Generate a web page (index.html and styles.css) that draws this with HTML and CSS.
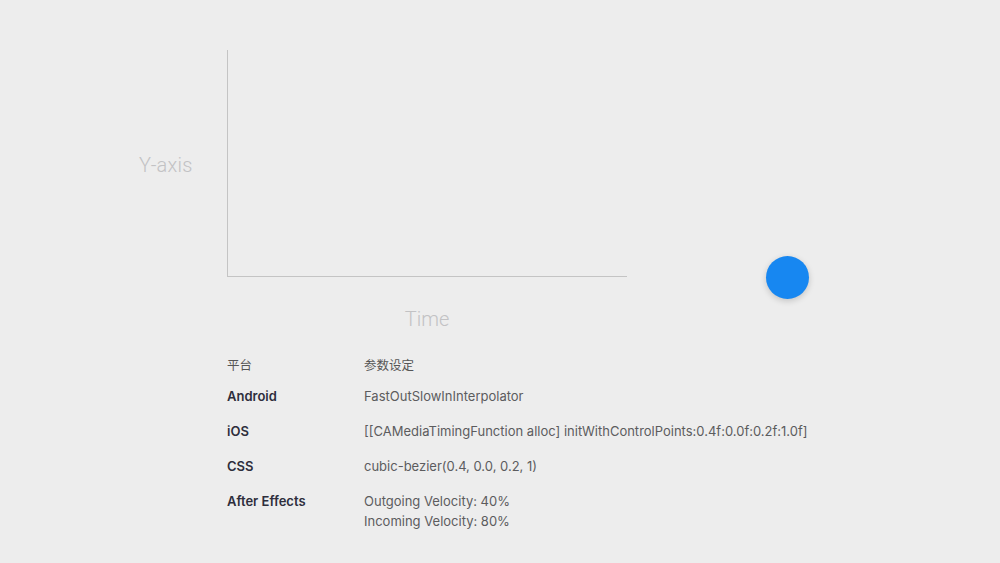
FILE: index.html
```html
<!DOCTYPE html>
<html lang="zh">
<head>
<meta charset="utf-8">
<link rel="stylesheet" href="styles.css">
</head>
<body>
<main class="page">
  <section class="chart">
    <div class="ylabel">Y-axis</div>
    <div class="plot"></div>
    <div class="ball"></div>
  </section>
  <div class="xlabel">Time</div>
  <section class="specs">
    <div class="head">平台</div><div class="head">参数设定</div>
    <div class="label r1">Android</div><div class="val r1">FastOutSlowInInterpolator</div>
    <div class="label">iOS</div><div class="val">[[CAMediaTimingFunction alloc] initWithControlPoints:0.4f:0.0f:0.2f:1.0f]</div>
    <div class="label">CSS</div><div class="val">cubic-bezier(0.4, 0.0, 0.2, 1)</div>
    <div class="label">After Effects</div><div class="val">Outgoing Velocity: 40%<br>Incoming Velocity: 80%</div>
  </section>
</main>
</body>
</html>
```
FILE: styles.css
```css
html, body { margin: 0; padding: 0; }
body {
  background: #ededed;
  width: 1000px;
  height: 563px;
  overflow: hidden;
  font-family: Inter, "Noto Sans CJK SC", sans-serif;
}
.page { padding-top: 50px; }
.chart {
  display: flex;
  padding-left: 139px;
}
.ylabel {
  width: 88px;
  align-self: center;
  font-family: Roboto, sans-serif;
  font-weight: 300;
  font-size: 20px;
  letter-spacing: 0.2px;
  color: #c2c2c4;
  margin-top: 2px;
}
.plot {
  width: 399px;
  height: 226px;
  border-left: 1px solid #c4c4c4;
  border-bottom: 1px solid #c4c4c4;
}
.ball {
  width: 43px;
  height: 43px;
  border-radius: 50%;
  background: #1787f1;
  box-shadow: 0 2px 6px rgba(0,0,0,0.18);
  align-self: flex-end;
  margin-left: 139px;
  margin-bottom: -22px;
}
.xlabel {
  margin-left: 227px;
  width: 400px;
  text-align: center;
  font-family: Roboto, sans-serif;
  font-weight: 300;
  font-size: 20px;
  color: #c2c2c4;
  margin-top: 30px;
}
.specs {
  display: grid;
  grid-template-columns: 137px auto;
  margin-left: 227px;
  margin-top: 25px;
  font-size: 13px;
  line-height: 20px;
  color: #5c5c5e;
  row-gap: 15px;
}
.head { color: #555; font-size: 12.5px; }
.r1 { margin-top: -5px; }
.label { font-weight: 600; color: #2e2e3c; }
```
